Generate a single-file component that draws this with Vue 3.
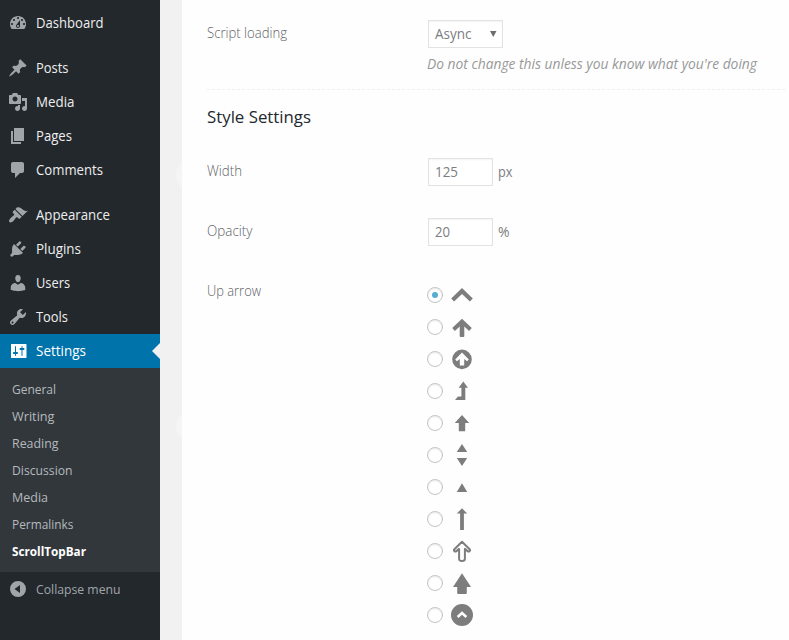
<script setup>
const menu = [
  { t: 'Dashboard', w: 67.5, d: 'M3.76 16h12.48c1.1-1.37 1.76-3.11 1.76-5 0-4.42-3.58-8-8-8s-8 3.58-8 8c0 1.89.66 3.63 1.76 5zM10 4c.55 0 1 .45 1 1s-.45 1-1 1-1-.45-1-1 .45-1 1-1zM6 6c.55 0 1 .45 1 1s-.45 1-1 1-1-.45-1-1 .45-1 1-1zm8 0c.55 0 1 .45 1 1s-.45 1-1 1-1-.45-1-1 .45-1 1-1zm-5.37 5.55L12 7v6c0 1.1-.9 2-2 2s-2-.9-2-2c0-.57.24-1.08.63-1.45zM4 10c.55 0 1 .45 1 1s-.45 1-1 1-1-.45-1-1 .45-1 1-1zm12 0c.55 0 1 .45 1 1s-.45 1-1 1-1-.45-1-1 .45-1 1-1zm-5 3c0-.55-.45-1-1-1s-1 .45-1 1 .45 1 1 1 1-.45 1-1z' },
  { t: 'Posts', w: 32.5, gap: true, d: 'M10.44 3.02l1.82-1.82 6.36 6.35-1.83 1.82c-1.05-.68-2.48-.57-3.41.36l-.75.75c-.92.93-1.04 2.35-.35 3.41l-1.83 1.82-2.41-2.41-2.8 2.79c-.42.42-3.38 2.71-3.8 2.29s1.86-3.39 2.28-3.81l2.79-2.79L4.1 9.36l1.83-1.82c1.05.69 2.48.57 3.4-.36l.75-.75c.93-.92 1.05-2.35.36-3.41z' },
  { t: 'Media', w: 38.5, d: 'M13 11V4c0-.55-.45-1-1-1h-1.67L9 1H5L3.67 3H2c-.55 0-1 .45-1 1v7c0 .55.45 1 1 1h10c.55 0 1-.45 1-1zM7 4.5c1.38 0 2.5 1.12 2.5 2.5S8.38 9.5 7 9.5 4.5 8.38 4.5 7 5.62 4.5 7 4.5zM14 6h5v10.5c0 1.38-1.12 2.5-2.5 2.5S14 17.88 14 16.5s1.12-2.5 2.5-2.5c.17 0 .34.02.5.05V9h-3V6zm-4 8.05V13h2v3.5c0 1.38-1.12 2.5-2.5 2.5S7 17.88 7 16.5 8.12 14 9.5 14c.17 0 .34.02.5.05z' },
  { t: 'Pages', w: 36, d: 'M6 15V2h10v13H6zm-1 1h8v2H3V5h2v11z' },
  { t: 'Comments', w: 67, d: 'M5 2h9c1.1 0 2 .9 2 2v7c0 1.1-.9 2-2 2h-2l-5 5v-5H5c-1.1 0-2-.9-2-2V4c0-1.1.9-2 2-2z' },
  { t: 'Appearance', w: 74, gap: true, d: 'M14.48 11.06L7.41 3.99l1.5-1.5c.5-.56 2.3-.47 3.51.32 1.21.8 1.43 1.28 2.91 2.1 1.18.64 2.45 1.26 4.45.85zm-.71.71L6.7 4.7 4.93 6.47c-.39.39-.39 1.02 0 1.41l1.06 1.06c.39.39.39 1.03 0 1.42-.6.6-1.43 1.11-2.21 1.69-.35.26-.7.53-1.01.84C1.43 14.23.4 16.08 1.4 17.07c.99 1 2.84-.03 4.18-1.36.31-.31.58-.66.85-1.02.57-.78 1.08-1.61 1.69-2.21.39-.39 1.02-.39 1.41 0l1.06 1.06c.39.39 1.02.39 1.41 0z' },
  { t: 'Plugins', w: 45, d: 'M13.11 4.36L9.87 7.6 8 5.73l3.24-3.24c.35-.34 1.05-.2 1.56.32.52.51.66 1.21.31 1.55zm-8 1.77l.91-1.12 9.01 9.01-1.19.84c-.71.71-2.63 1.16-3.82 1.16H6.14L4.9 17.26c-.59.59-1.54.59-2.12 0-.59-.58-.59-1.53 0-2.12l1.24-1.24v-3.88c0-1.13.4-3.19 1.09-3.89zm7.26 3.97l3.24-3.24c.34-.35 1.04-.21 1.55.31.52.51.66 1.21.31 1.55l-3.24 3.25z' },
  { t: 'Users', w: 34, d: 'M10 9.25c-2.27 0-2.73-3.44-2.73-3.44C7 4.02 7.82 2 9.97 2c2.16 0 2.98 2.02 2.71 3.81 0 0-.41 3.44-2.68 3.44zm0 2.57L12.72 10c2.39 0 4.52 2.33 4.52 4.53v2.49s-3.65 1.13-7.24 1.13c-3.65 0-7.24-1.13-7.24-1.13v-2.49c0-2.25 1.94-4.48 4.47-4.48z' },
  { t: 'Tools', w: 32, d: 'M16.68 9.77c-1.34 1.34-3.3 1.67-4.95.99l-5.41 6.52c-.99.99-2.59.99-3.58 0s-.99-2.59 0-3.57l6.52-5.42c-.68-1.65-.35-3.61.99-4.95 1.28-1.28 3.12-1.62 4.72-1.06l-2.89 2.89 2.82 2.82 2.86-2.87c.53 1.58.18 3.39-1.08 4.65zM3.81 16.21c.4.39 1.04.39 1.43 0 .4-.4.4-1.04 0-1.43-.39-.4-1.03-.4-1.43 0-.39.39-.39 1.03 0 1.43z' },
  { t: 'Settings', w: 50, active: true, d: 'M18.500 16.500V3.500c0-.3-.2-.5-.5-.5H3.500c-.3 0-.5.2-.5.5v13c0 .3.2.5.5.5H18c.3 0 .5-.2.5-.5zM8 11h1c.55 0 1 .45 1 1s-.45 1-1 1H8v1.5c0 .28-.22.5-.5.5s-.5-.22-.5-.5V13H6c-.55 0-1-.45-1-1s.45-1 1-1h1V5.5c0-.28.22-.5.5-.5s.5.22.5.5V11zm5.500-2h-1c-.55 0-1-.45-1-1s.45-1 1-1h1V5.5c0-.28.22-.5.5-.5s.5.22.5.5V7h1c.55 0 1 .45 1 1s-.45 1-1 1h-1v5.5c0 .28-.22.5-.5.5s-.5-.22-.5-.5V9z' }
]
const submenu = [
  { t: 'General', w: 44 }, { t: 'Writing', w: 42.5 }, { t: 'Reading', w: 46.5 },
  { t: 'Discussion', w: 60.5 }, { t: 'Media', w: 36 }, { t: 'Permalinks', w: 61.5 },
  { t: 'ScrollTopBar', w: 74, current: true }
]
const arrows = [
  { fill: 'M12 5L22.8 15.600l-2.900 2.900L12 11l-7.900 7.500-2.900-2.900z' },
  { fill: 'M12 3.700l9.8 9.300-2.700 2.900-4.800-4.300v9.500q0 1-1 1h-2.600q-1 0-1-1v-9.500l-4.800 4.300L2.200 13z' },
  { fill: 'M12 2.600a9.800 9.800 0 1 0 0 19.600 9.800 9.800 0 0 0 0-19.600zM12 5.600l6.800 6.800-1.700 1.900-2.900-2.400v6.500H9.800v-6.500l-2.900 2.400-1.700-1.900z' },
  { fill: 'M13.300 2.600l4.700 6.200h-2.700v12.100H5l3-3.500h3.400V8.800H8.600z' },
  { fill: 'M12 4l7.200 8h-4v8.200H8.800V12h-4z' },
  { fill: 'M12 1l5.200 8H6.800zM6.800 15h10.400L12 23z' },
  { fill: 'M12 8.300l5.200 8.700H6.800z' },
  { fill: 'M12 1.200l5.200 5.200h-3.300V23h-3.800V6.400H6.800z' },
  { line: 'M12 2.700l7.600 7.500q1 .9 0 1.900-1 .8-2 0l-2.700-2.200v9.800q0 2.300-2.900 2.300t-2.900-2.300V9.900l-2.700 2.200q-1 .8-2 0-1-1 0-1.900z' },
  { fill: 'M12 2.300l9 13.700h-4.200v6.100q0 .9-.9.900H8.100q-.9 0-.9-.9V16H3z' },
  { fill: 'M12 1a11 11 0 1 0 0 22 11 11 0 0 0 0-22zM12 8.200l5.200 4.900-1.700 1.900-3.500-3.200L8.500 15l-1.700-1.900z' }
]
</script>

<template>
  <div class="page">
    <nav class="side">
      <a v-for="m in menu" :key="m.t" class="item" :class="{ gap: m.gap, active: m.active }">
        <svg class="ico" viewBox="0 0 20 20"><path :d="m.d" fill-rule="evenodd" /></svg>
        <svg class="txt" height="20" width="110"><text x="0" y="15" :textLength="m.w" lengthAdjust="spacingAndGlyphs">{{ m.t }}</text></svg>
      </a>
      <div class="sub">
        <a v-for="s in submenu" :key="s.t" :class="{ current: s.current }">
          <svg class="txt" height="20" width="120"><text x="0" y="15" :textLength="s.w" lengthAdjust="spacingAndGlyphs">{{ s.t }}</text></svg>
        </a>
      </div>
      <a class="item collapse">
        <svg class="ico" viewBox="0 0 20 20"><path fill-rule="evenodd" d="M10 2a8 8 0 1 0 0 16 8 8 0 0 0 0-16zM12 6v8l-5.5-4z" /></svg>
        <svg class="txt" height="20" width="110"><text x="0" y="15" textLength="84.5" lengthAdjust="spacingAndGlyphs">Collapse menu</text></svg>
      </a>
    </nav>
    <div class="gutter"><i class="bump one"></i><i class="bump two"></i></div>
    <main class="main">
      <div class="row script">
        <label class="light"><svg class="txt" height="20" width="160"><text y="15" textLength="80" lengthAdjust="spacingAndGlyphs">Script loading</text></svg></label>
        <div class="field">
          <div class="select">
            <svg class="txt" height="20" width="40"><text y="15" textLength="36.5" lengthAdjust="spacingAndGlyphs">Async</text></svg>
            <svg class="caret" viewBox="0 0 7 6"><path d="M0 0h6.5L3.25 6z" /></svg>
          </div>
          <svg class="txt hint" height="20" width="340"><text y="15" textLength="330" lengthAdjust="spacingAndGlyphs">Do not change this unless you know what you're doing</text></svg>
        </div>
      </div>
      <svg class="dash" height="1" width="580"><line x1="0" x2="580" y1=".5" y2=".5" /></svg>
      <h3><svg class="txt" height="24" width="200"><text y="17" textLength="104" lengthAdjust="spacingAndGlyphs">Style Settings</text></svg></h3>
      <div class="row">
        <label class="light"><svg class="txt" height="20" width="160"><text y="15" textLength="35" lengthAdjust="spacingAndGlyphs">Width</text></svg></label>
        <div class="field inline"><div class="input"><svg class="txt" height="20" width="40"><text y="15" textLength="23" lengthAdjust="spacingAndGlyphs">125</text></svg></div>
          <svg class="txt unit" height="20" width="30"><text y="15" textLength="14.5" lengthAdjust="spacingAndGlyphs">px</text></svg></div>
      </div>
      <div class="row">
        <label class="light"><svg class="txt" height="20" width="160"><text y="15" textLength="45.5" lengthAdjust="spacingAndGlyphs">Opacity</text></svg></label>
        <div class="field inline"><div class="input"><svg class="txt" height="20" width="40"><text y="15" textLength="15" lengthAdjust="spacingAndGlyphs">20</text></svg></div>
          <svg class="txt unit" height="20" width="30"><text y="15" textLength="11.5" lengthAdjust="spacingAndGlyphs">%</text></svg></div>
      </div>
      <div class="row arrows">
        <label class="light"><svg class="txt" height="20" width="160"><text y="15" textLength="54" lengthAdjust="spacingAndGlyphs">Up arrow</text></svg></label>
        <div class="field">
          <div v-for="(a, i) in arrows" :key="i" class="opt">
            <span class="radio" :class="{ on: i === 0 }"></span>
            <svg class="arrow" viewBox="0 0 24 24"><path :d="a.fill || a.line" :class="{ outline: a.line }" fill-rule="evenodd" /></svg>
          </div>
        </div>
      </div>
    </main>
  </div>
</template>

<style>
body { margin: 0; overflow: hidden; }
</style>
<style scoped>
.page { display: flex; width: 789px; height: 640px; overflow: hidden; background: #fefefe; font: 14px 'Open Sans', 'Noto Sans', sans-serif; }
.txt { display: block; flex: none; overflow: visible; fill: currentColor; }
.side { box-sizing: border-box; width: 160px; height: 640px; padding-top: 6px; background: #23282d; flex: none; }
.item { position: relative; display: flex; align-items: center; height: 34px; padding-left: 8px; color: #eee; gap: 8px; font-size: 14px; }
.item.gap { margin-top: 11px; }
.ico { width: 20px; height: 20px; fill: #a0a5aa; flex: none; }
.item.active { background: #0073aa; color: #fff; }
.active .ico { fill: #fff; }
.active::after { content: ''; position: absolute; right: 0; top: 9px; border: 8px solid transparent; border-left: 0; border-right-color: #f1f1f1; }
.sub { height: 189px; padding: 7px 0 8px 12px; background: #32373c; color: #b4b9be; font-size: 13px; }
.sub a { display: flex; align-items: center; height: 27px; }
.sub .current { color: #fff; font-weight: 700; }
.collapse { color: #a0a5aa; font-size: 13px; }
.gutter { position: relative; width: 22px; background: #f1f1f1; flex: none; overflow: hidden; }
.bump { position: absolute; left: 16px; width: 30px; height: 30px; border-radius: 50%; background: #f5f5f5; }
.one { top: 160px; }
.two { top: 411px; }
.main { flex: 1; min-width: 0; padding-left: 25px; color: #7b7d80; }
.row { display: flex; height: 60px; }
.light { width: 220px; flex: none; font-weight: 300; font-size: 14px; color: #606368; padding-top: 3px; }
.script { height: 69px; padding-top: 20px; }
.select, .input { box-sizing: border-box; display: flex; align-items: center; height: 28px; margin-left: 1px; border: 1px solid #e3e3e3; background: #fff; padding-left: 6px; box-shadow: inset 0 1px 2px rgba(0,0,0,.05); }
.select { width: 75px; justify-content: space-between; padding-right: 5px; }
.input { width: 65px; }
.caret { width: 7px; height: 6px; fill: #6b6e70; }
.hint { margin-top: 6px; font-style: italic; color: #999; }
.dash { display: block; }
.dash line { stroke: #f0f0f0; stroke-dasharray: 3 2; }
h3 { margin: 0; height: 68px; padding-top: 16px; box-sizing: border-box; font-weight: 500; font-size: 16px; color: #23282d; }
.inline { display: flex; align-items: flex-start; }
.unit { margin: 4px 0 0 5px; }
.arrows { height: 370px; }
.arrows .field { padding-top: 1px; }
.opt { display: flex; align-items: center; height: 32px; gap: 7px; }
.radio { box-sizing: border-box; width: 16px; height: 16px; border: 1px solid #c4c4c4; border-radius: 50%; background: #fff; box-shadow: inset 0 1px 2px rgba(0,0,0,.09); display: grid; place-items: center; }
.radio.on::after { content: ''; width: 6px; height: 6px; border-radius: 50%; background: #57acd2; }
.arrow { width: 24px; height: 24px; fill: #7d7d7d; }
.outline { fill: none; stroke: #7d7d7d; stroke-width: 2; stroke-linejoin: round; }
</style>
